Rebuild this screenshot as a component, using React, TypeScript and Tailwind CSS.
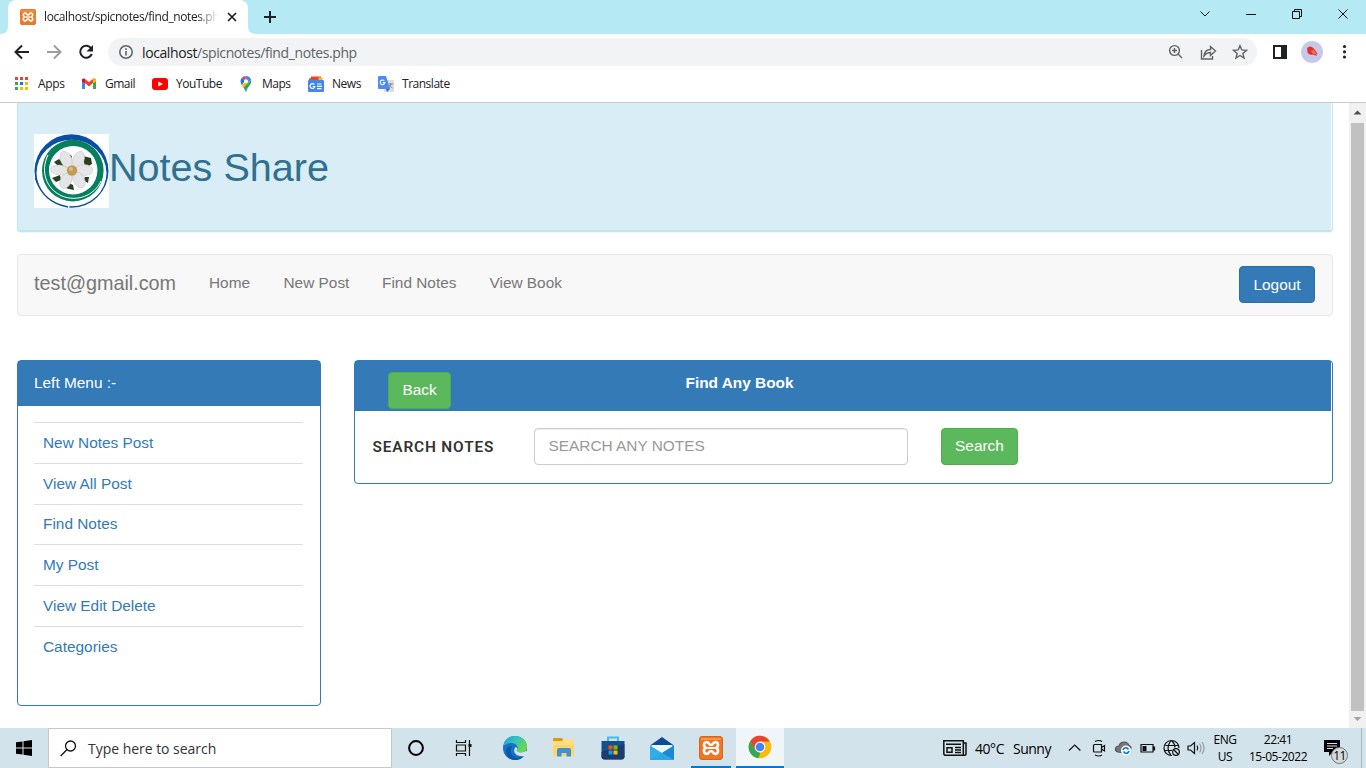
import React from "react";

const ui = "font-['Open_Sans','Noto_Sans',sans-serif]";

function Xampp({ size }: { size: number }) {
  return (
    <svg width={size} height={size} viewBox="0 0 24 24">
      <rect x="0.5" y="0.5" width="23" height="23" rx="2.5" fill="#f0761f" stroke="#d9631a" />
      <path d="M2 3h20" stroke="#f9a467" strokeWidth="1.4" />
      <path
        d="M8.3 6.2C4.6 5.4 3.8 10.600 7 11.900C3.800 13.200 4.600 18.600 8.300 17.800C10 17.400 10 15 12 15C14 15 14 17.400 15.700 17.800C19.400 18.600 20.200 13.200 17 11.900C20.200 10.600 19.400 5.400 15.700 6.200C14 6.600 14 9 12 9C10 9 10 6.600 8.300 6.200Z"
        fill="none"
        stroke="#fff"
        strokeWidth="2.6"
      />
      <path d="M9 12h6" stroke="#fff" strokeWidth="2" />
    </svg>
  );
}

function Logo() {
  return (
    <svg width="75" height="74" viewBox="0 0 75 74" className="shrink-0 bg-white">
      <ellipse cx="37.500" cy="37" rx="37" ry="36.800" fill="#0a4fa3" />
      <ellipse cx="37.500" cy="39" rx="35" ry="33.300" fill="#fff" />
      <circle cx="38.800" cy="36.600" r="30.800" fill="#04805f" />
      <circle cx="39.200" cy="36.200" r="24.200" fill="#fff" />
      <path d="M14 21C6 37 12 55 28 62C43 68 60 62 67 47" fill="none" stroke="#fff" strokeWidth="1" />
      <path d="M2 46C9 62 21 68 36 70L35 74C18 76 3 62 2 46Z" fill="#fff" />
      <path d="M1.500 44C7 62 18 70 34 73" fill="none" stroke="#0a4fa3" strokeWidth="1.600" />
      <path d="M20 28l5-3 5 5-3 5zM32 19l6 3-2 6zM49 22l8 2 1 6-7 4zM51 43l4 0-1 6-5-3zM32 54l3-5 4 2 1 5-5-1zM18 44l8-3 1 5-5 2z" fill="#28401d" />
      <g fill="#e5e4e6" stroke="#bfc0c5" strokeWidth=".5">
        <ellipse cx="32" cy="25.500" rx="5.500" ry="8.500" transform="rotate(-24 32 25.500)" />
        <ellipse cx="44.500" cy="25.500" rx="5.500" ry="8.500" transform="rotate(24 44.500 25.500)" />
        <ellipse cx="50" cy="36" rx="9" ry="5.500" transform="rotate(2 50 36)" />
        <ellipse cx="45" cy="46" rx="5.500" ry="8.500" transform="rotate(-28 45 46)" />
        <ellipse cx="32" cy="46.500" rx="5.500" ry="8.500" transform="rotate(28 32 46.500)" />
        <ellipse cx="25.500" cy="36" rx="9" ry="5" transform="rotate(5 25.500 36)" />
      </g>
      <circle cx="38" cy="36.500" r="5.200" fill="#c29c55" />
      <circle cx="37" cy="35" r="2" fill="#dabb78" />
    </svg>
  );
}

function Bookmark({ icon, label, w }: { icon: React.ReactNode; label: string; w: string }) {
  return (
    <div className={`flex shrink-0 items-center ${w}`}>
      <span className="flex w-[24px] shrink-0 items-center">{icon}</span>
      <span className="whitespace-nowrap text-[12px] tracking-[-0.48px] text-[#202124]">{label}</span>
    </div>
  );
}

function AppsIcon() {
  const colors = ["#ea4335", "#ea4335", "#ea4335", "#34a853", "#1a73e8", "#fbbc04", "#34a853", "#fbbc04", "#fbbc04"];
  return (
    <svg width="14" height="14">
      {colors.map((c, i) => (
        <rect key={i} x={(i % 3) * 5} y={Math.floor(i / 3) * 5} width="3" height="3" fill={c} />
      ))}
    </svg>
  );
}

function Browser() {
  return (
    <div className={`${ui} flex h-[103px] shrink-0 flex-col border-b border-[#c9cacb] bg-white`}>
      <div className="flex h-[34px] shrink-0 items-stretch bg-[#b5e9f3]">
        <svg width="8" height="34"><path d="M0 34Q8 34 8 26V34Z" fill="#fff" /></svg>
        <div className="flex w-[240px] items-center rounded-t-lg bg-white pl-3 pr-[11px]">
          <Xampp size={16} />
          <div className="ml-2 w-[174px] overflow-hidden whitespace-nowrap text-[12px] tracking-[-0.4px] text-[#202124] [mask-image:linear-gradient(to_right,black_88%,transparent)]">
            localhost/spicnotes/find_notes.php
          </div>
          <svg width="10" height="10" viewBox="0 0 10 10" className="ml-auto"><path d="M1 1l8 8M9 1l-8 8" stroke="#202124" strokeWidth="1.700" /></svg>
        </div>
        <svg width="8" height="34"><path d="M0 34V26Q0 34 8 34Z" fill="#fff" /></svg>
        <svg width="28" height="34"><path d="M8 17h12M14 11v12" stroke="#202124" strokeWidth="2" /></svg>
        <svg width="166" height="34" className="ml-auto" fill="none" stroke="#111">
          <path d="M.5 11.500l4.500 4.500L9.500 11.500" />
          <path d="M46 14.500h10" />
          <path d="M92.500 11.500h7v7h-7zM94.500 11.500v-2h7v7h-2" />
          <path d="M138.500 9.500l9 9M147.500 9.500l-9 9" />
        </svg>
      </div>
      <div className="flex h-[36px] shrink-0 items-center">
        <svg width="108" height="36" fill="none" stroke="#202124" strokeWidth="2">
          <path d="M29 18H16.500M22 11.500L15.500 18L22 24.500" />
          <path d="M47 18H59.500M54 11.500L60.500 18L54 24.500" stroke="#9b9da0" />
          <path d="M91.300 14.500A6 6 0 1 0 91.800 20" />
          <path d="M93 11v6.500h-6.500z" fill="#202124" stroke="none" />
        </svg>
        <div className="flex h-7 w-[1149px] items-center rounded-full bg-[#f1f3f4] pl-[11px] pr-[9px]">
          <svg width="14" height="14" fill="none" stroke="#5f6368" strokeWidth="1.500"><circle cx="7" cy="7" r="6.200" /><path d="M7 6v4.500M7 3.300v1.600" strokeWidth="1.600" /></svg>
          <span className="ml-[9px] whitespace-nowrap text-[14px] tracking-[-0.4px] text-[#5f6368]">
            <span className="text-[#202124]">localhost</span>/spicnotes/find_notes.php
          </span>
          <svg width="80" height="18" className="ml-auto" fill="none" stroke="#5f6368" strokeWidth="1.400">
            <circle cx="6.500" cy="7.500" r="4.900" /><path d="M10 11l4 4M4 7.500h5M6.500 5v5" />
            <path d="M33.500 7v9h11v-3" />
            <path d="M36 13C36.500 9 39 6.500 42.500 6.500V3.500L47.500 8l-5 4.500V9.500C39.500 9.500 37.500 11 36 13Z" />
            <path d="M72 2.700l1.800 4.200 4.700.4-3.600 3.100 1.100 4.600-4-2.500-4 2.500 1.100-4.600-3.600-3.100 4.700-.4z" />
          </svg>
        </div>
        <svg width="109" height="36">
          <rect x="17" y="12" width="12" height="12" fill="#fff" stroke="#202124" strokeWidth="2" /><path d="M24 12h5v12h-5z" fill="#202124" />
          <circle cx="55" cy="18" r="11" fill="#c5cae9" />
          <path d="M50 14.500Q51 12 54 12.500Q56 13 58 16L61 20.500L59 20L60 22L56 20.500Q52 21.500 50.500 18.500Z" fill="#e5322c" /><path d="M54 16l3 .5 2.500 3.500-4-.5z" fill="#ff7658" />
          <circle cx="87.500" cy="12.500" r="1.600" fill="#202124" /><circle cx="87.500" cy="17.800" r="1.600" fill="#202124" /><circle cx="87.500" cy="23" r="1.600" fill="#202124" />
        </svg>
      </div>
      <div className="flex h-7 items-center pl-[15px]">
        <div className="flex w-[66px] shrink-0 items-center">
          <span className="flex w-[23px] shrink-0 items-center"><AppsIcon /></span>
          <span className="whitespace-nowrap text-[12px] tracking-[-0.35px] text-[#202124]">Apps</span>
        </div>
        <Bookmark w="w-[71px]" label="Gmail" icon={
          <svg width="16" height="12" viewBox="0 0 16 12"><path d="M1 1v10h3V4z" fill="#4285f4" /><path d="M12 4v7h3V1z" fill="#34a853" /><path d="M1 2.500C1 .5 3 .2 4 1l4 3 4-3c1-.8 3-.5 3 1.500L8 8.500z" fill="#ea4335" /><path d="M12 1.200c1-.8 3-.7 3 1.300v1l-3 2z" fill="#fbbc04" /><path d="M4 1.200C3 .4 1 .5 1 2.500v1l3 2z" fill="#c5221f" /></svg>} />
        <Bookmark w="w-[86px]" label="YouTube" icon={
          <svg width="16" height="12"><rect width="16" height="12" rx="3" fill="#f00" /><path d="M6.300 3.400v5.200L11 6z" fill="#fff" /></svg>} />
        <Bookmark w="w-[70px]" label="Maps" icon={
          <svg width="16" height="16" viewBox="0 0 16 16"><path d="M8 0a5.500 5.500 0 0 0-4.300 2.100L7 5z" fill="#ea4335" /><path d="M8 0C10.500 0 12.500 1.500 13.200 3.700L9.800 6.800 7 5z" fill="#4285f4" /><path d="M3.700 2.100C2 4 2.400 6.800 3.600 8.900L7 5z" fill="#1a73e8" /><path d="M3.600 8.900L10 4.500 9.800 7.200 5.400 11.400z" fill="#fbbc04" /><path d="M13.200 3.700C14.300 8.500 9 10.500 8.300 16 7.700 16 7.300 13.600 5.400 11.400z" fill="#34a853" /><circle cx="8" cy="5.300" r="2" fill="#fff" /></svg>} />
        <Bookmark w="w-[70px]" label="News" icon={
          <svg width="16" height="16"><path d="M1 2.500l3-1 2 4H1z" fill="#34a853" /><path d="M3 .5h10v5H3z" fill="#ea4335" /><path d="M11 1l4 1.500-1 3h-4z" fill="#fbbc04" /><rect y="4" width="16" height="12" rx="1" fill="#4285f4" /><path d="M6.300 8.500A2.400 2.400 0 1 0 6.800 10.500H4.800M9 8h4.500M9 10.300h5M9 12.600h4.500" fill="none" stroke="#fff" strokeWidth="1.200" /></svg>} />
        <Bookmark w="w-[80px]" label="Translate" icon={
          <svg width="16" height="16"><rect x="6" y="4" width="10" height="12" rx="1" fill="#dadce0" /><path d="M1 0h7l4 13H1Q0 13 0 12V1Q0 0 1 0Z" fill="#4c8bf5" /><path d="M8 13h4l-3 3z" fill="#3367d6" /><path d="M6.300 4.800A2.300 2.300 0 1 0 6.800 6.600H4.700" fill="none" stroke="#fff" strokeWidth="1.100" /><path d="M10.500 8h4.500M12.700 7v1c0 2-1 3-2 4M11.500 9c.8 1.500 2 2.500 3 3" fill="none" stroke="#70757a" strokeWidth=".8" /></svg>} />
      </div>
    </div>
  );
}

const menu = ["New Notes Post", "View All Post", "Find Notes", "My Post", "View Edit Delete", "Categories"];

function Page() {
  return (
    <main className="flex min-w-0 flex-1 flex-col bg-white pl-[17px] pr-[16px] font-['Liberation_Sans',Arial,sans-serif] text-[15.4px] leading-[22px]">
      <header className="flex h-[129px] shrink-0 items-start rounded-b border border-t-0 border-b-2 border-[#bce8f1] bg-[#d9edf7] pl-4 pt-[31px] shadow-[inset_-1px_0_#fff,0_1px_1px_rgba(0,0,0,0.05)]">
        <Logo />
        <h1 className="mt-[11px] text-[39.6px] leading-[44px] text-[#31708f]">Notes Share</h1>
      </header>
      <nav className="mt-[22px] flex h-[62px] shrink-0 items-start rounded border border-[#e7e7e7] bg-[#f8f8f8] pl-4 pr-[17px] text-[#777]">
        <span className="mt-[17px] w-[175px] text-[19.8px]">test@gmail.com</span>
        <span className="mt-[17px] w-[74.5px]">Home</span>
        <span className="mt-[17px] w-[98.5px]">New Post</span>
        <span className="mt-[17px] w-[107.5px]">Find Notes</span>
        <span className="mt-[17px]">View Book</span>
        <button className="ml-auto mt-[11px] h-[37px] w-[76px] rounded border border-[#2e6da4] bg-[#337ab7] text-white">Logout</button>
      </nav>
      <div className="mt-[44px] flex items-start gap-[33px]">
        <aside className="h-[346px] w-[304px] shrink-0 rounded border border-[#337ab7]">
          <div className="h-[45px] bg-[#337ab7] pl-4 pt-[11px] text-white">Left Menu :-</div>
          <ul className="mr-[17px] ml-4 mt-4">
            {menu.map((m) => (
              <li key={m} className="h-[40.8px] border-t border-[#ddd] pl-[9px] pt-[8.8px] text-[#337ab7]">{m}</li>
            ))}
          </ul>
        </aside>
        <section className="h-[124px] min-w-0 flex-1 rounded border border-[#337ab7]">
          <div className="mr-px flex h-[50px] items-start bg-[#337ab7] pl-[33px] font-bold text-white">
            <button className="mt-[11px] h-[37px] w-[63px] rounded border border-[#4cae4c] bg-[#5cb85c] pb-[2px] font-normal">Back</button>
            <span className="ml-[234.5px] mt-[11px]">Find Any Book</span>
          </div>
          <div className="flex items-center pl-[17.5px] pt-[17px]">
            <label className="w-[161.5px] whitespace-nowrap font-['Roboto',sans-serif] text-[15.4px] font-semibold tracking-[0.85px] text-[#333]">SEARCH NOTES</label>
            <input className="h-[37px] w-[374px] rounded border border-[#ccc] px-[13.5px] pb-[2px] text-[15.4px] shadow-[inset_0_1px_1px_rgba(0,0,0,0.075)] placeholder:text-[#999]" placeholder="SEARCH ANY NOTES" />
            <button className="ml-[33px] h-[37px] w-[77px] rounded border border-[#4cae4c] bg-[#5cb85c] pb-[2px] text-white">Search</button>
          </div>
        </section>
      </div>
    </main>
  );
}

function Scrollbar() {
  return (
    <div className="flex w-[17px] shrink-0 flex-col items-center bg-[#f1f1f1]">
      <svg width="17" height="20"><path d="M4.500 11.500h8L8.500 7.500z" fill="#505050" /></svg>
      <div className="h-[588px] w-[13px] bg-[#c1c1c1]" />
      <svg width="17" height="17"><path d="M4.500 6h8l-4 4z" fill="#a3a3a3" /></svg>
    </div>
  );
}

function Cell({ children, className }: { children: React.ReactNode; className?: string }) {
  return <div className={`flex h-10 shrink-0 items-center justify-center ${className ?? ""}`}>{children}</div>;
}

function Taskbar() {
  return (
    <footer className={`${ui} flex h-10 shrink-0 items-center bg-[#d3e3eb] text-black`}>
      <div className="flex w-12 justify-center">
        <svg width="16" height="16"><path d="M0 2.300L6.500 1.400V7.500H0zM7.500 1.200L16 0V7.500H7.500zM0 8.500h6.500v6.100L0 13.700zM7.500 8.500H16V16l-8.500-1.200z" /></svg>
      </div>
      <div className="flex h-10 w-[344px] items-center border border-[#c4c8ca] bg-white pl-[11px]">
        <svg width="17" height="17" fill="none" stroke="#111" strokeWidth="1.300"><circle cx="10.500" cy="6" r="5" /><path d="M7 9.500L.7 16" /></svg>
        <span className="ml-[11px] whitespace-nowrap text-[14px] tracking-[-0.03px] text-[#333]">Type here to search</span>
      </div>
      <Cell className="w-12"><svg width="16" height="16"><circle cx="8" cy="8" r="6.900" fill="none" stroke="#000" strokeWidth="2" /></svg></Cell>
      <Cell className="w-12"><svg width="18" height="16" fill="none" stroke="#111" strokeWidth="1.200"><path d="M1.500 0v2.500h9V0M1.500 16v-2.500h9V16M1.500 5h9v6h-9zM14.500 0v16" /><path d="M13.500 4h3v3h-3z" fill="#111" stroke="none" /></svg></Cell>
      <Cell className="ml-[2px] w-[49px]">
        <svg width="24" height="24" viewBox="0 0 24 24"><defs><linearGradient id="eg" x1="0" y1="0" x2="1" y2=".5"><stop stopColor="#1aa1dc" /><stop offset=".5" stopColor="#35c1c1" /><stop offset="1" stopColor="#69d94b" /></linearGradient></defs><circle cx="12" cy="12" r="12" fill="#1473c8" /><path d="M.3 10.500C1.500 4 6 0 12 0c7 0 12 4.500 12 10.500 0 4-3 6-6.500 6-2.500 0-4.300-1-4-2 .3-.8 1-1.400 1-3C14.500 8 10 6.500 7 7 3.500 7.500 1 9 .3 10.500Z" fill="url(#eg)" /><path d="M9.500 10.500C6 14 8 21 14 21.500c4 .3 7-2 8.500-4-1.500 4-5.500 6.500-10.500 6.500C5 24 2 18 3 14c1-3 4-4.500 6.500-3.500Z" fill="#0c59a4" /><path d="M13.700 14.200c-.3.800 1 2.300 3.800 2.300 2.500 0 4.500-.8 5.500-2l1 2.500-2 3.500c-4 0-9-.7-10.500-4-.8-2 0-4.500 1.300-5.500 1.200.5 1.700 2 .9 3.200Z" fill="#d5e4ec" /></svg>
      </Cell>
      <Cell className="w-[49px]">
        <svg width="22" height="20"><path d="M0 1q0-1 1-1h8l2 3h-11z" fill="#d99c15" /><path d="M0 3h21v15H0z" fill="#ffd567" /><path d="M0 3h9l2-1.500h10V7H0z" fill="#ffdd80" /><path d="M4 18.500V12q0-2 2-2h10q2 0 2 2v6.500h-4.500V15h-5v3.500z" fill="#3e92d2" /></svg>
      </Cell>
      <Cell className="w-[49px]">
        <svg width="24" height="24"><path d="M7 5V1.500h10V5" fill="none" stroke="#3dbdf3" strokeWidth="2" /><path d="M.5 5h23v15.500q0 3-3 3h-17q-3 0-3-3z" fill="#174f88" /><path d="M.5 16L23.500 8v12.500q0 3-3 3h-17q-3 0-3-3z" fill="#1c3866" opacity=".8" /><path d="M7.500 9.500h4v4h-4z" fill="#f25022" /><path d="M12.500 9.500h4v4h-4z" fill="#7fba00" /><path d="M7.500 14.500h4v4h-4z" fill="#00a4ef" /><path d="M12.500 14.500h4v4h-4z" fill="#ffb900" /></svg>
      </Cell>
      <Cell className="w-[49px]">
        <svg width="24" height="23"><path d="M0 8.500L12 0l12 8.500z" fill="#0b4d94" /><path d="M2 8h20v8H2z" fill="#e9f5fc" /><path d="M0 8.500l12 7.500 12-7.500V23H0z" fill="#31aee6" /><path d="M12 16l12-7.500V23z" fill="#1b88d2" /><path d="M0 23l12-7 12 7z" fill="#2ba7e5" /></svg>
      </Cell>
      <Cell className="relative w-[49px]"><Xampp size={24} /><span className="absolute bottom-0 left-[5px] h-[2px] w-10 bg-[#0078d7]" /></Cell>
      <Cell className="relative ml-[1px] w-12 border-b-2 border-[#0078d7] bg-[#eff5f8]">
        <svg width="24" height="24" viewBox="0 0 24 24"><circle cx="12" cy="12" r="11.300" fill="#fbbc05" /><path d="M2.200 6.300A11.300 11.300 0 0 1 21.800 6.500H12L7 15z" fill="#ea4335" /><path d="M2.200 6.300L7.300 15l5 3-1.800 5.300A11.300 11.300 0 0 1 2.200 6.300z" fill="#34a853" /><circle cx="12" cy="12" r="5.400" fill="#fff" /><circle cx="12" cy="12" r="4.300" fill="#4285f4" /></svg>
      </Cell>
      <div className="ml-auto flex h-10 items-center">
        <svg width="24" height="16" fill="none" stroke="#111" strokeWidth="1.500"><path d="M.8.8h19.500v14.500H2.500q-1.700 0-1.700-2zM20.500 3H23v11q0 1.300-1.500 1.300h-2M3 4.200h15M12 7.500h6M12 10h6M12 12.500h6" /><path d="M4 7.700h5v4.500H4z" /></svg>
        <span className="ml-2 w-[38px] whitespace-nowrap text-[14px] tracking-[-0.45px]">40°C</span>
        <span className="w-[47px] whitespace-nowrap text-[14px] tracking-[-0.5px]">Sunny</span>
        <svg width="142" height="20" fill="none" stroke="#111" strokeWidth="1.200" className="ml-[8px]">
          <path d="M1 12.500l5.700-5.500 5.700 5.500" />
          <path d="M26.500 6.500h7v7.500h-7q-1 0-1-1V7.500q0-1 1-1zM33.500 9.500l3-2v5.500l-3-2M27 3.500q4-2 7 0M27 17q4 2 7 0" />
          <path d="M50 14q-3-1-2.500-3.500T51 8q1-4 5.500-4 3 0 4.500 3.500 3 1 1.500 4l-5 3.500z" fill="#777" stroke="#555" />
          <circle cx="58" cy="12.500" r="5" fill="#fff" stroke="none" /><path d="M55 12q1-3 4-2l1.500 1.500M61 13q-1 3-4 2L55.500 13.500" stroke="#0078d7" strokeWidth="1.700" />
          <path d="M73 6.500h12v7.500H73zM85.500 9v3h1V9z" /><path d="M74.500 8h4v5h-4z" fill="#111" stroke="none" />
          <path d="M104 17.500A7.500 7.500 0 1 1 111 10M97.500 7.500h12.500M97 12.500h7M103 2.500q-6 7.500 0 15M103.500 2.500q3.500 3 3.500 7" /><circle cx="108" cy="14" r="3.300" /><path d="M106 12l4 4" />
          <path d="M120 8h2.500l4-3.500v11l-4-3.500H120zM129 7.500q1.500 2.500 0 5" /><path d="M131.500 5.500q3 4.500 0 9M134 4q4 6 0 12" stroke="#91a0a7" />
        </svg>
        <div className="w-[30px] text-center text-[12px] leading-[17px] tracking-[-0.4px]">ENG<br />US</div>
        <div className="ml-[3px] w-[70px] whitespace-nowrap text-center text-[12px] leading-[17px] tracking-[-0.45px]">22:41<br />15-05-2022</div>
        <div className="relative ml-[11px] h-10 w-[37px]">
          <svg width="17" height="18" className="absolute left-0 top-[12px]"><path d="M0 0h16v12H9l-4 4v-4H0z" fill="#000" /><path d="M3 3.500h10M3 6h10M3 8.500h6" stroke="#d3e3eb" /></svg>
          <span className="absolute left-[7px] top-[19px] flex h-[17px] w-[17px] items-center justify-center rounded-full border border-[#777] bg-[#d5d9dc] text-[12px] leading-none tracking-[-0.6px]">11</span>
        </div>
        <div className="h-10 w-[5px] border-l border-[#a7b5bc]" />
      </div>
    </footer>
  );
}

export default function App() {
  return (
    <div className="flex h-[768px] w-[1366px] flex-col overflow-hidden bg-white">
      <Browser />
      <div className="flex h-[625px] shrink-0">
        <Page />
        <Scrollbar />
      </div>
      <Taskbar />
    </div>
  );
}
